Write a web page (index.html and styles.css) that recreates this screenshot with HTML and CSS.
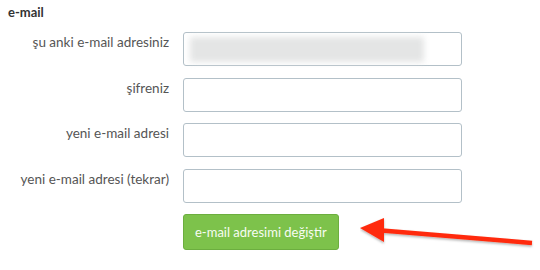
FILE: index.html
```html
<!DOCTYPE html>
<html lang="tr">
<head>
    <meta charset="UTF-8">
    <meta name="viewport" content="width=device-width, initial-scale=1.0">
    <title>e-mail</title>
    <link rel="stylesheet" href="styles.css">
</head>
<body>
    <div class="panel">
        <h4 class="panel-title">e-mail</h4>
        <form class="email-form">
            <div class="form-row">
                <label for="currentEmail">şu anki e-mail adresiniz</label>
                <div class="field">
                    <input type="text" id="currentEmail" readonly>
                    <span class="blurred"></span>
                </div>
            </div>
            <div class="form-row">
                <label for="password">şifreniz</label>
                <input type="password" id="password">
            </div>
            <div class="form-row">
                <label for="newEmail">yeni e-mail adresi</label>
                <input type="text" id="newEmail">
            </div>
            <div class="form-row">
                <label for="newEmail2">yeni e-mail adresi (tekrar)</label>
                <input type="text" id="newEmail2">
            </div>
            <div class="form-row">
                <span></span>
                <div class="actions">
                    <button type="button" class="btn-submit">e-mail adresimi değiştir</button>
                    <svg class="arrow" width="180" height="34" viewBox="0 0 180 34">
                        <defs>
                            <filter id="shadow" x="-10%" y="-50%" width="120%" height="200%">
                                <feDropShadow dx="0" dy="1.5" stdDeviation="1.2" flood-color="#000" flood-opacity="0.3"/>
                            </filter>
                        </defs>
                        <g filter="url(#shadow)" fill="#ff2a0c" stroke="#ff2a0c">
                            <line x1="22" y1="14.5" x2="172" y2="27" stroke-width="4.5"/>
                            <polygon points="0,12 24,2 24,26" stroke="none"/>
                        </g>
                    </svg>
                </div>
            </div>
        </form>
    </div>
</body>
</html>
```

FILE: styles.css
```css
* {
    box-sizing: border-box;
    margin: 0;
    padding: 0;
}
body {
    font-family: 'Source Sans Pro', Lato, sans-serif;
    font-size: 13.5px;
    color: #555;
    background: white;
    padding: 4px 8px;
}
.panel-title {
    font-size: 13px;
    font-weight: bold;
    color: #333;
    line-height: 16px;
    margin-bottom: 12px;
}
.email-form {
    display: flex;
    flex-direction: column;
    gap: 11.5px;
}
.form-row {
    display: grid;
    grid-template-columns: 161px 279px;
    column-gap: 14px;
    align-items: start;
}
label {
    text-align: right;
    line-height: 20px;
}
input {
    width: 279px;
    height: 34px;
    border: 1px solid #b3c0c8;
    border-radius: 3px;
    outline: none;
    font-size: 14px;
    padding: 6px 10px;
    background: white;
}
.field {
    position: relative;
}
.blurred {
    position: absolute;
    left: 7px;
    top: 5px;
    width: 234px;
    height: 25px;
    background: #e4e5e5;
    filter: blur(3px);
}
.actions {
    display: flex;
    align-items: flex-start;
}
.btn-submit {
    flex: none;
    height: 36px;
    padding: 0 11px;
    border: 1px solid #6cae3f;
    border-radius: 3px;
    background: #7dc24b;
    color: #f7fcf3;
    font-family: inherit;
    font-size: 13px;
    cursor: pointer;
}
.arrow {
    flex: none;
    margin-left: 21px;
    margin-top: 2px;
}
```
